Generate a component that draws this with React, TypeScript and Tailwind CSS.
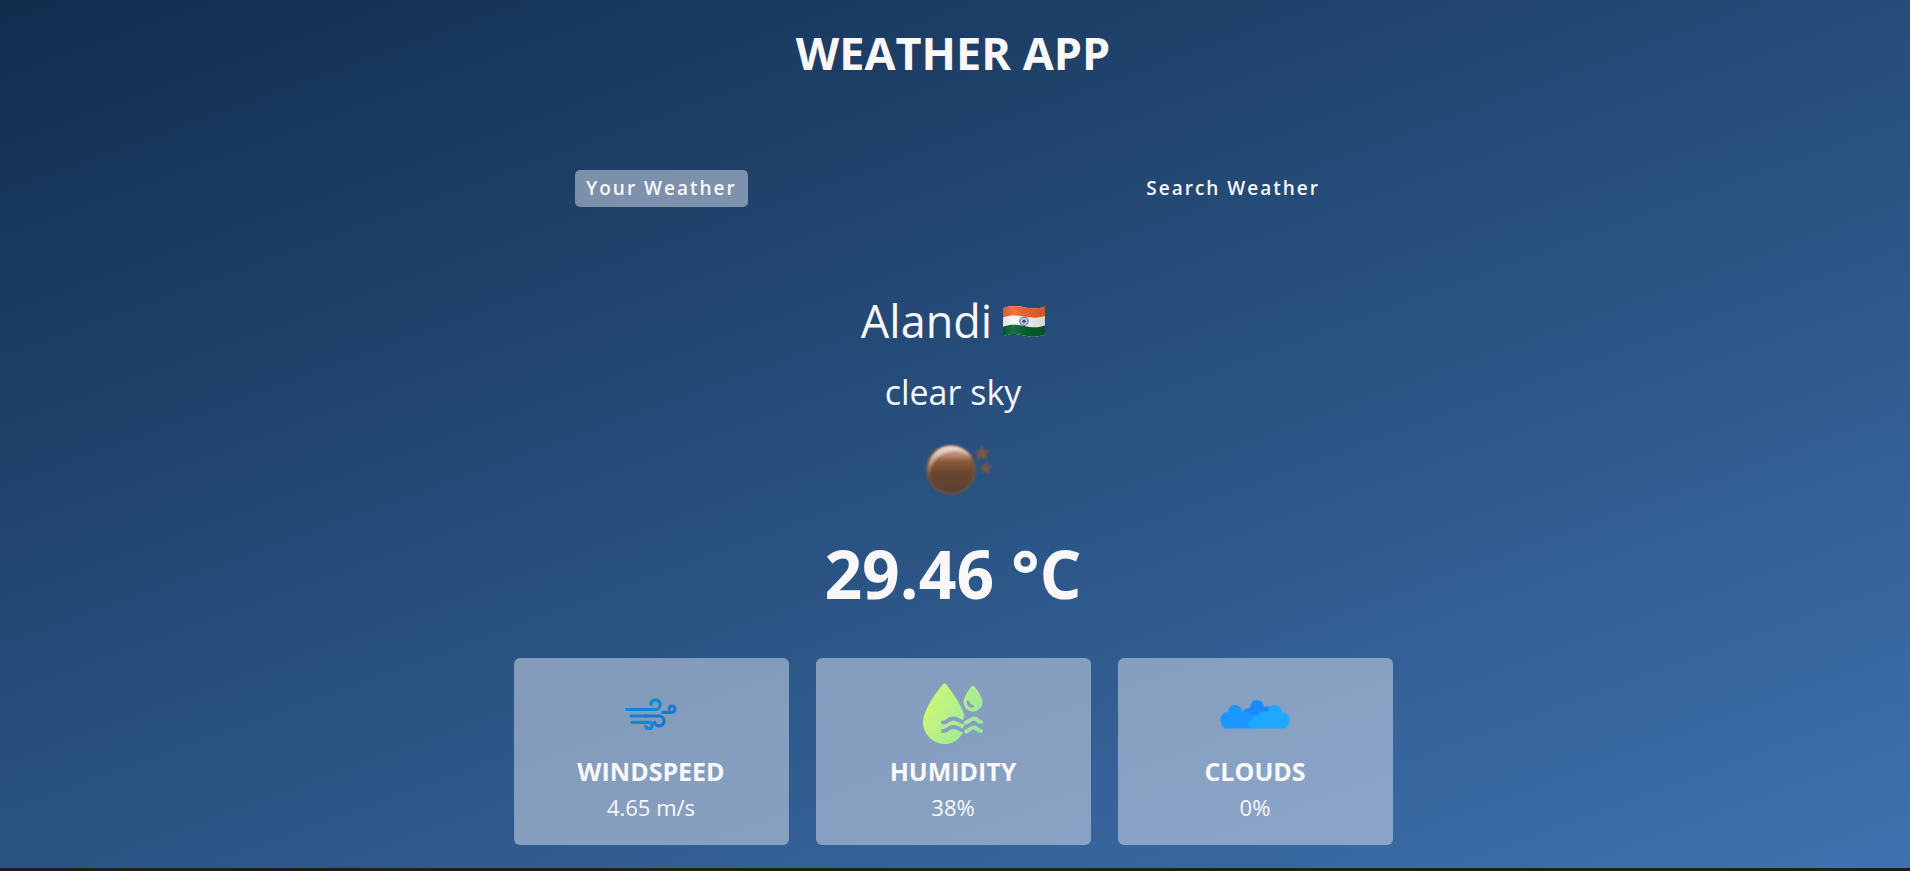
import { useState, type ReactNode } from "react";

function IndiaFlag() {
  return (
    <svg role="img" aria-label="India" viewBox="0 0 42 31" className="h-[31px] w-[42px]">
      <defs>
        <linearGradient id="flag-shade" x1="0" x2="1" y1="0" y2="0">
          <stop offset="0" stopColor="#000" stopOpacity="0.08" />
          <stop offset="0.25" stopColor="#fff" stopOpacity="0.1" />
          <stop offset="0.6" stopColor="#000" stopOpacity="0.06" />
          <stop offset="1" stopColor="#000" stopOpacity="0.14" />
        </linearGradient>
        <clipPath id="flag-shape">
          <path d="M0 2.2C7-.4 13-.6 21 1.200S35 3.200 42 .6V28.600C35 31.200 29 31.200 21 29.400S7 27.400 0 30.200Z" />
        </clipPath>
      </defs>
      <g clipPath="url(#flag-shape)">
        <path fill="#f7f7f7" d="M0 0h42v31H0z" />
        <path fill="#f26430" d="M0 0H42V10C35 12.400 29 12.200 21 10.600S7 8.800 0 11.400Z" />
        <path fill="#04602c" d="M0 20.800C7 18.200 13 18.200 21 20S35 21.800 42 19.400V31H0Z" />
        <path fill="url(#flag-shade)" d="M0 0h42v31H0z" />
      </g>
      <circle cx="21" cy="15.300" r="4.200" fill="#dcdcec" stroke="#54549a" strokeWidth="0.900" />
      <path stroke="#54549a" strokeWidth="0.500" d="M21 11.100v8.400M16.800 15.300h8.400M18 12.300l6 6M24 12.300l-6 6" />
      <circle cx="21" cy="15.300" r="1.500" fill="#3f3f8c" />
    </svg>
  );
}

function ClearNight() {
  return (
    <svg aria-hidden="true" viewBox="6 0 88 75" className="h-[75px] w-[88px]">
      <defs>
        <linearGradient id="moon-body" x1="0" x2="0" y1="0" y2="1">
          <stop offset="0" stopColor="#c9a593" />
          <stop offset="0.2" stopColor="#b88a6f" />
          <stop offset="0.32" stopColor="#8a5a3b" />
          <stop offset="0.55" stopColor="#6a4730" />
          <stop offset="1" stopColor="#5a4130" />
        </linearGradient>
        <linearGradient id="moon-glow" x1="0.400" x2="0.500" y1="0" y2="1">
          <stop offset="0" stopColor="#f3e4dc" stopOpacity="0.900" />
          <stop offset="0.450" stopColor="#e0bfab" stopOpacity="0.600" />
          <stop offset="1" stopColor="#a77756" stopOpacity="0" />
        </linearGradient>
        <filter id="moon-soft" x="-20%" y="-20%" width="140%" height="140%">
          <feGaussianBlur stdDeviation="0.800" />
        </filter>
      </defs>
      <g filter="url(#moon-soft)" transform="translate(6 0)">
        <circle cx="42" cy="39.500" r="25" fill="#77543f" />
        <circle cx="42" cy="39.500" r="23.500" fill="url(#moon-body)" />
        <path fill="url(#moon-glow)" d="M21 51C14 32 26 16 42 16c9 0 16 4 20 11-10-7-20-7-28-3C25 29 20 37 21 51Z" />
        <path fill="#795847" stroke="#795847" strokeWidth="0.800" d="m73 16 2 4.500 5 .5-3.600 3.400 1 5-4.400-2.500-4.400 2.500 1-5L66 21l5-.5ZM77 32l1.600 4 4.400.4-3.300 2.900 1 4.300-3.700-2.300-3.700 2.300 1-4.300-3.300-2.900 4.400-.4Z" />
      </g>
    </svg>
  );
}

function WindIcon() {
  return (
    <svg aria-hidden="true" viewBox="0 0 52 32" className="h-8 w-[52px]" fill="none" strokeWidth="3.200" strokeLinecap="round">
      <g stroke="#0b88d6">
        <path d="M1.800 11.500H30.500a4.700 4.700 0 0 0 4.700-4.700V6.500a4.600 4.600 0 0 0-9.200 0" />
        <path d="M7 24.300H23.500a3.200 3.200 0 1 1-2.700 4.200" />
      </g>
      <g stroke="#1a75d9">
        <path d="M38 14.300H47a3 3 0 0 0 3-3V11a2.900 2.900 0 0 0-5.800 0" />
        <path d="M20 18h14a5 5 0 0 1 5 5 4.800 4.800 0 0 1-9.400 1.500" />
      </g>
      <path stroke="#137fd8" d="M6 18h16" />
    </svg>
  );
}

function HumidityIcon() {
  return (
    <svg aria-hidden="true" viewBox="0 0 60 62" className="h-[62px] w-[60px]">
      <defs>
        <linearGradient id="humidity-fill" gradientUnits="userSpaceOnUse" x1="6" x2="60" y1="14" y2="44">
          <stop offset="0" stopColor="#cdf873" />
          <stop offset="1" stopColor="#97e7a2" />
        </linearGradient>
        <mask id="humidity-mask">
          <path fill="#fff" d="M0 0h60v62H0z" />
          <path stroke="#000" strokeWidth="4" strokeLinecap="round" fill="none" d="M20 39.500c5 0 5-4 10.500-4s6 4 12 4V35M20 48c5 0 5-4 10.500-4s6 4 12 4V44" />
        </mask>
      </defs>
      <path fill="url(#humidity-fill)" mask="url(#humidity-mask)" d="M19.400 1.800Q21.500-.6 23.600 1.800C30 10 42 27 42.500 38.500 43 51 33 61 21.500 61S0 51 0 39.500C0 27 13 10 19.400 1.800Z" />
      <path fill="url(#humidity-fill)" fillRule="evenodd" d="M48.500 3.500q1.500-1.600 3 0C55 7.500 59.500 15 59.500 19a9.500 9.500 0 0 1-19 0c0-4 4.500-11.500 8-15.500ZM46.200 18.200c-.8-1.500-3.100-.6-2.500 1.200a6 6 0 0 0 5.500 5.300c2 .1 2.300-2.600.4-2.900-1.900-.3-2.900-1.600-3.400-3.600Z" />
      <path stroke="url(#humidity-fill)" strokeWidth="4" strokeLinecap="round" fill="none" d="M43 39.500c3-.5 4-4 8-4 3.500 0 3.500 3.500 7 3.500M43 48.500c3-.5 4-4 8-4 3.500 0 3.500 3.500 7 3.500" />
    </svg>
  );
}

function CloudsIcon() {
  return (
    <svg aria-hidden="true" viewBox="0 0 70 30" className="h-[30px] w-[70px]">
      <path fill="#1a8bff" d="M22 13q3-4 8-4Q31 1 37 1t7 7q5-2 8 1v9H22Z" />
      <path fill="#1b98ff" d="M5 29.500Q.5 26 .5 20.500C.5 15 4 13 8.500 13 8 8.500 11 6 15 6s7.500 3 6.500 7c4-2 8 0 8 3 5 0 7 4 7 7v6.500Z" />
      <path fill="#20a7ff" d="M31 29.500c-4-2-4-8 1-9 0-3 3-5 6-4 1-4 5-5 10-4C48.500 8 51 6 55 6s7 3 7 7.500c4-.5 7.500 2.500 7.500 7s-2 7-4.500 9Z" />
    </svg>
  );
}

function WeatherCard({ icon, name, value }: { icon: ReactNode; name: string; value: string }) {
  return (
    <article className="flex w-full max-w-[275px] flex-col items-center rounded-md bg-[#dbe2ef]/50 pt-6 pb-[19px]">
      <div className="flex h-[64px] items-center justify-center">{icon}</div>
      <h2 className="mt-[7px] text-[25px] leading-9 font-bold">{name}</h2>
      <p className="text-[22px] leading-[37px]">{value}</p>
    </article>
  );
}

const tabs = ["Your Weather", "Search Weather"];

export default function App() {
  const [active, setActive] = useState(tabs[0]);
  return (
    <div className="flex min-h-screen flex-col bg-[#211e1c] font-['Open_Sans',sans-serif] text-[#f9f7f7]">
      <main className="mb-[3px] flex grow flex-col items-center bg-[linear-gradient(160deg,#112d4e_0%,#3f72af_100%)] pr-5 pb-[23px] pl-4">
        <h1 className="pt-[23px] text-[45px] leading-[60px] font-bold">WEATHER APP</h1>
        <nav className="mt-[87px] flex w-full max-w-[756px] justify-between">
          {tabs.map((tab) => (
            <button
              key={tab}
              type="button"
              aria-pressed={active === tab}
              onClick={() => setActive(tab)}
              className={
                "h-[37px] cursor-pointer rounded-[5px] px-[11px] text-[19px] font-semibold tracking-[2px] " +
                (active === tab ? "bg-[#dbe2ef]/50" : "")
              }
            >
              {tab}
            </button>
          ))}
        </nav>
        <section className="flex w-full flex-col items-center">
          <div className="mt-[81px] flex items-center gap-[11px]">
            <p className="text-[45px] leading-[66px] font-normal">Alandi</p>
            <IndiaFlag />
          </div>
          <p className="mt-2 text-[34px] leading-[60px] font-normal">clear sky</p>
          <div className="mt-2">
            <ClearNight />
          </div>
          <p className="mt-5 text-[66px] leading-[96px] font-bold">29.46 °C</p>
          <div className="mt-[37px] flex w-full justify-center gap-[27px]">
            <WeatherCard icon={<WindIcon />} name="WINDSPEED" value="4.65 m/s" />
            <WeatherCard icon={<HumidityIcon />} name="HUMIDITY" value="38%" />
            <WeatherCard icon={<CloudsIcon />} name="CLOUDS" value="0%" />
          </div>
        </section>
      </main>
    </div>
  );
}
